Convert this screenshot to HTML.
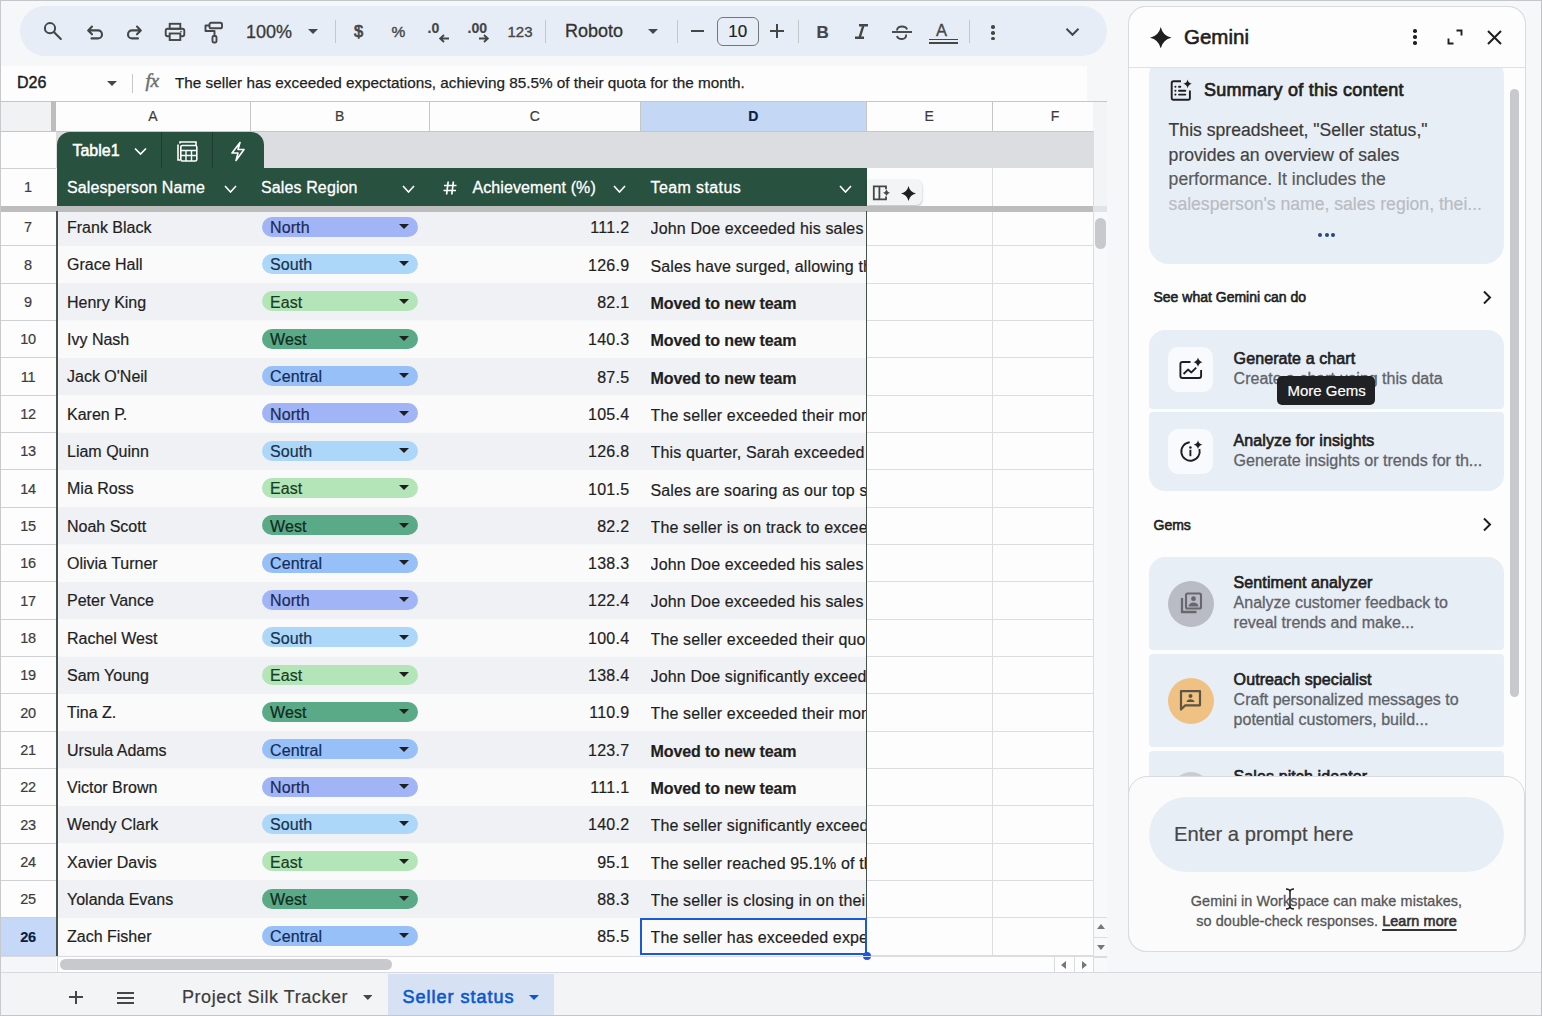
<!DOCTYPE html>
<html><head><meta charset="utf-8"><style>
html,body{margin:0;padding:0;width:1542px;height:1016px;overflow:hidden;background:#f9fbfd;}
body>div,body>svg{position:absolute;}
.t{position:absolute;white-space:nowrap;font-family:"Liberation Sans", sans-serif;-webkit-text-stroke-width:0.2px;}
</style></head><body>
<div style="left:0.00px;top:0.00px;width:1542.00px;height:1016.00px;background:#f6f7f9;"></div><div style="left:20.00px;top:6.00px;width:1087.00px;height:49.50px;background:#e7edf6;border-radius:25px;"></div><svg style="position:absolute;left:42.00px;top:20.00px;" width="22" height="22" viewBox="0 0 22 22"><circle cx="8" cy="8.2" r="5.1" fill="none" stroke="#444746" stroke-width="2"/><line x1="11.8" y1="12" x2="18.8" y2="19" stroke="#444746" stroke-width="2.1" stroke-linecap="round"/></svg><svg style="position:absolute;left:85.00px;top:21.00px;" width="20" height="20" viewBox="0 0 20 20"><path d="M7 5.5 L3.2 9.4 L7 13.3 M3.5 9.4 H13 a4 4 0 0 1 0 8 H6.5" fill="none" stroke="#444746" stroke-width="2.1" stroke-linecap="round" stroke-linejoin="round"/></svg><svg style="position:absolute;left:124.00px;top:21.00px;" width="20" height="20" viewBox="0 0 20 20"><path d="M13 5.5 L16.8 9.4 L13 13.3 M16.5 9.4 H8 a4 4 0 0 0 0 8 H14" fill="none" stroke="#444746" stroke-width="2.1" stroke-linecap="round" stroke-linejoin="round"/></svg><svg style="position:absolute;left:163.00px;top:21.00px;" width="23" height="21" viewBox="0 0 23 21"><rect x="6.7" y="2.8" width="10.6" height="5" fill="none" stroke="#444746" stroke-width="1.9"/><rect x="2.7" y="7.8" width="18.6" height="7.5" rx="2" fill="none" stroke="#444746" stroke-width="1.9"/><rect x="6.7" y="12.5" width="10.6" height="6.5" fill="#e8eef7" stroke="#444746" stroke-width="1.9"/><circle cx="18" cy="10.6" r="0.8" fill="#444746"/></svg><svg style="position:absolute;left:202.00px;top:21.00px;" width="22" height="23" viewBox="0 0 22 23"><rect x="7.5" y="1.8" width="12.5" height="5.5" rx="1.6" fill="none" stroke="#444746" stroke-width="1.9"/><path d="M7.5 4.5 H3.5 V10 H12.5 V14.5" fill="none" stroke="#444746" stroke-width="1.9" stroke-linejoin="round"/><rect x="10.5" y="15" width="4" height="6.5" rx="1.2" fill="none" stroke="#444746" stroke-width="1.9"/></svg><div class="t " style="left:246.00px;top:23.26px;font-size:18px;line-height:18px;color:#3a3a3a;font-weight:400;-webkit-text-stroke:0.3px #3a3a3a;">100%</div><svg style="position:absolute;left:308.00px;top:29.00px;" width="10" height="5" viewBox="0 0 10 5"><path d="M0 0 H10 L5.0 5 Z" fill="#444746"/></svg><div style="left:334.50px;top:19.50px;width:1.20px;height:23.50px;background:#c7c7c7;"></div><div class="t " style="left:354.00px;top:22.83px;font-size:16.5px;line-height:16.5px;color:#444746;font-weight:400;-webkit-text-stroke:0.7px #444746;">$</div><div class="t " style="left:391.50px;top:23.68px;font-size:15.5px;line-height:15.5px;color:#444746;font-weight:400;-webkit-text-stroke:0.4px #444746;">%</div><div class="t " style="left:427.50px;top:21.45px;font-size:14px;line-height:14px;color:#444746;font-weight:700;">.0</div><svg style="position:absolute;left:438.00px;top:34.00px;" width="12" height="9" viewBox="0 0 12 9"><path d="M11 4.5 H2.5 M6 1 L2.2 4.5 L6 8" fill="none" stroke="#444746" stroke-width="1.9"/></svg><div class="t " style="left:467.50px;top:21.45px;font-size:14px;line-height:14px;color:#444746;font-weight:700;">.00</div><svg style="position:absolute;left:477.50px;top:34.00px;" width="12" height="9" viewBox="0 0 12 9"><path d="M1 4.5 H9.5 M6 1 L9.8 4.5 L6 8" fill="none" stroke="#444746" stroke-width="1.9"/></svg><div class="t " style="left:507.50px;top:23.60px;font-size:15px;line-height:15px;color:#444746;font-weight:400;-webkit-text-stroke:0.35px #444746;">123</div><div style="left:545.00px;top:19.50px;width:1.20px;height:23.50px;background:#c7c7c7;"></div><div class="t " style="left:565.00px;top:21.56px;font-size:18px;line-height:18px;color:#333;font-weight:400;-webkit-text-stroke:0.3px #333;">Roboto</div><svg style="position:absolute;left:648.00px;top:29.00px;" width="10" height="5" viewBox="0 0 10 5"><path d="M0 0 H10 L5.0 5 Z" fill="#444746"/></svg><div style="left:676.50px;top:19.50px;width:1.20px;height:23.50px;background:#c7c7c7;"></div><div style="left:690.50px;top:30.20px;width:13.50px;height:1.90px;background:#444746;"></div><div style="left:716.50px;top:16.50px;width:42.00px;height:29.00px;border:1.4px solid #767676;border-radius:6px;box-sizing:border-box;"></div><div class="t " style="left:728.30px;top:22.81px;font-size:17px;line-height:17px;color:#1f1f1f;font-weight:400;">10</div><div style="left:770.40px;top:30.20px;width:13.50px;height:1.90px;background:#444746;"></div><div style="left:776.20px;top:24.20px;width:1.90px;height:13.50px;background:#444746;"></div><div style="left:797.50px;top:19.50px;width:1.20px;height:23.50px;background:#c7c7c7;"></div><div class="t " style="left:816.50px;top:24.21px;font-size:17px;line-height:17px;color:#444746;font-weight:700;">B</div><svg style="position:absolute;left:854.00px;top:24.00px;" width="15" height="15" viewBox="0 0 15 15"><path d="M5 1.2 H14 M1 13.8 H10 M9.5 1.2 L5.5 13.8" fill="none" stroke="#444746" stroke-width="2.4"/></svg><svg style="position:absolute;left:891.00px;top:22.00px;" width="22" height="20" viewBox="0 0 22 20"><path d="M6 8.5 C6 5.5 8.5 4.5 11 4.5 C13.5 4.5 15.5 5.5 16 7.5" fill="none" stroke="#444746" stroke-width="1.9"/><line x1="1" y1="10" x2="21" y2="10" stroke="#444746" stroke-width="1.9"/><path d="M15 12.5 C15.5 15.5 13.5 17 11 17 C8.5 17 6.5 16 6 14" fill="none" stroke="#444746" stroke-width="1.9"/></svg><div class="t " style="left:936.00px;top:21.63px;font-size:16.5px;line-height:16.5px;color:#444746;font-weight:400;-webkit-text-stroke:0.35px #444746;">A</div><div style="left:928.50px;top:38.70px;width:29.00px;height:1.60px;background:#444746;"></div><div style="left:928.50px;top:42.00px;width:29.00px;height:1.60px;background:#444746;"></div><div style="left:968.50px;top:19.50px;width:1.20px;height:23.50px;background:#c7c7c7;"></div><div style="left:991.30px;top:25.20px;width:3.60px;height:3.60px;background:#444746;border-radius:50%;"></div><div style="left:991.30px;top:31.00px;width:3.60px;height:3.60px;background:#444746;border-radius:50%;"></div><div style="left:991.30px;top:36.80px;width:3.60px;height:3.60px;background:#444746;border-radius:50%;"></div><svg style="position:absolute;left:1065.00px;top:27.00px;" width="15" height="10" viewBox="0 0 15 10"><path d="M1.5 1.8 L7.5 7.8 L13.5 1.8" fill="none" stroke="#444746" stroke-width="2"/></svg><div style="left:0.00px;top:65.50px;width:1087.00px;height:35.50px;background:#fdfdfd;"></div><div class="t " style="left:17.00px;top:74.96px;font-size:16px;line-height:16px;color:#1f1f1f;font-weight:400;-webkit-text-stroke:0.45px #1f1f1f;">D26</div><svg style="position:absolute;left:106.50px;top:81.00px;" width="10" height="5" viewBox="0 0 10 5"><path d="M0 0 H10 L5.0 5 Z" fill="#444746"/></svg><div style="left:131.80px;top:73.50px;width:1.20px;height:19.50px;background:#c7c7c7;"></div><div class="t " style="left:145.50px;top:71.49px;font-size:19.5px;line-height:19.5px;color:#6f6f6f;font-weight:400;font-style:italic;font-family:'Liberation Serif',serif;letter-spacing:-0.5px;-webkit-text-stroke:0.5px #6f6f6f;">fx</div><div class="t " style="left:175.00px;top:75.05px;font-size:15.3px;line-height:15.3px;color:#1f1f1f;font-weight:400;-webkit-text-stroke:0.25px #1f1f1f;">The seller has exceeded expectations, achieving 85.5% of their quota for the month.</div><div style="left:0.00px;top:101.00px;width:1093.00px;height:30.00px;background:#fdfdfd;"></div><div style="left:0.00px;top:101.00px;width:50.50px;height:30.00px;background:#f1f2f4;"></div><div style="left:640.00px;top:101.00px;width:226.50px;height:30.00px;background:#c4d7f5;"></div><div style="left:1093.00px;top:101.00px;width:14.00px;height:871.00px;background:#f8f9fa;"></div><div style="left:1093.00px;top:101.00px;width:14.00px;height:105.00px;background:#f3f4f6;"></div><div style="left:0.00px;top:131.00px;width:56.00px;height:37.00px;background:#fdfdfd;"></div><div style="left:56.00px;top:131.00px;width:1037.00px;height:37.00px;background:#dcdde0;"></div><div style="left:0.00px;top:168.00px;width:56.00px;height:38.00px;background:#fdfdfd;"></div><div style="left:866.50px;top:168.00px;width:226.50px;height:38.00px;background:#fdfdfd;"></div><div style="left:56.50px;top:168.00px;width:810.00px;height:38.00px;background:#28513f;"></div><div style="left:56.50px;top:208.50px;width:810.00px;height:37.33px;background:#f0f1f4;"></div><div style="left:0.00px;top:208.50px;width:56.00px;height:37.33px;background:#fdfdfd;"></div><div style="left:866.50px;top:208.50px;width:226.50px;height:37.33px;background:#fdfdfd;"></div><div style="left:56.50px;top:245.83px;width:810.00px;height:37.33px;background:#fafafb;"></div><div style="left:0.00px;top:245.83px;width:56.00px;height:37.33px;background:#fdfdfd;"></div><div style="left:866.50px;top:245.83px;width:226.50px;height:37.33px;background:#fdfdfd;"></div><div style="left:56.50px;top:283.17px;width:810.00px;height:37.33px;background:#f0f1f4;"></div><div style="left:0.00px;top:283.17px;width:56.00px;height:37.33px;background:#fdfdfd;"></div><div style="left:866.50px;top:283.17px;width:226.50px;height:37.33px;background:#fdfdfd;"></div><div style="left:56.50px;top:320.50px;width:810.00px;height:37.33px;background:#fafafb;"></div><div style="left:0.00px;top:320.50px;width:56.00px;height:37.33px;background:#fdfdfd;"></div><div style="left:866.50px;top:320.50px;width:226.50px;height:37.33px;background:#fdfdfd;"></div><div style="left:56.50px;top:357.83px;width:810.00px;height:37.33px;background:#f0f1f4;"></div><div style="left:0.00px;top:357.83px;width:56.00px;height:37.33px;background:#fdfdfd;"></div><div style="left:866.50px;top:357.83px;width:226.50px;height:37.33px;background:#fdfdfd;"></div><div style="left:56.50px;top:395.16px;width:810.00px;height:37.33px;background:#fafafb;"></div><div style="left:0.00px;top:395.16px;width:56.00px;height:37.33px;background:#fdfdfd;"></div><div style="left:866.50px;top:395.16px;width:226.50px;height:37.33px;background:#fdfdfd;"></div><div style="left:56.50px;top:432.50px;width:810.00px;height:37.33px;background:#f0f1f4;"></div><div style="left:0.00px;top:432.50px;width:56.00px;height:37.33px;background:#fdfdfd;"></div><div style="left:866.50px;top:432.50px;width:226.50px;height:37.33px;background:#fdfdfd;"></div><div style="left:56.50px;top:469.83px;width:810.00px;height:37.33px;background:#fafafb;"></div><div style="left:0.00px;top:469.83px;width:56.00px;height:37.33px;background:#fdfdfd;"></div><div style="left:866.50px;top:469.83px;width:226.50px;height:37.33px;background:#fdfdfd;"></div><div style="left:56.50px;top:507.16px;width:810.00px;height:37.33px;background:#f0f1f4;"></div><div style="left:0.00px;top:507.16px;width:56.00px;height:37.33px;background:#fdfdfd;"></div><div style="left:866.50px;top:507.16px;width:226.50px;height:37.33px;background:#fdfdfd;"></div><div style="left:56.50px;top:544.50px;width:810.00px;height:37.33px;background:#fafafb;"></div><div style="left:0.00px;top:544.50px;width:56.00px;height:37.33px;background:#fdfdfd;"></div><div style="left:866.50px;top:544.50px;width:226.50px;height:37.33px;background:#fdfdfd;"></div><div style="left:56.50px;top:581.83px;width:810.00px;height:37.33px;background:#f0f1f4;"></div><div style="left:0.00px;top:581.83px;width:56.00px;height:37.33px;background:#fdfdfd;"></div><div style="left:866.50px;top:581.83px;width:226.50px;height:37.33px;background:#fdfdfd;"></div><div style="left:56.50px;top:619.16px;width:810.00px;height:37.33px;background:#fafafb;"></div><div style="left:0.00px;top:619.16px;width:56.00px;height:37.33px;background:#fdfdfd;"></div><div style="left:866.50px;top:619.16px;width:226.50px;height:37.33px;background:#fdfdfd;"></div><div style="left:56.50px;top:656.50px;width:810.00px;height:37.33px;background:#f0f1f4;"></div><div style="left:0.00px;top:656.50px;width:56.00px;height:37.33px;background:#fdfdfd;"></div><div style="left:866.50px;top:656.50px;width:226.50px;height:37.33px;background:#fdfdfd;"></div><div style="left:56.50px;top:693.83px;width:810.00px;height:37.33px;background:#fafafb;"></div><div style="left:0.00px;top:693.83px;width:56.00px;height:37.33px;background:#fdfdfd;"></div><div style="left:866.50px;top:693.83px;width:226.50px;height:37.33px;background:#fdfdfd;"></div><div style="left:56.50px;top:731.16px;width:810.00px;height:37.33px;background:#f0f1f4;"></div><div style="left:0.00px;top:731.16px;width:56.00px;height:37.33px;background:#fdfdfd;"></div><div style="left:866.50px;top:731.16px;width:226.50px;height:37.33px;background:#fdfdfd;"></div><div style="left:56.50px;top:768.50px;width:810.00px;height:37.33px;background:#fafafb;"></div><div style="left:0.00px;top:768.50px;width:56.00px;height:37.33px;background:#fdfdfd;"></div><div style="left:866.50px;top:768.50px;width:226.50px;height:37.33px;background:#fdfdfd;"></div><div style="left:56.50px;top:805.83px;width:810.00px;height:37.33px;background:#f0f1f4;"></div><div style="left:0.00px;top:805.83px;width:56.00px;height:37.33px;background:#fdfdfd;"></div><div style="left:866.50px;top:805.83px;width:226.50px;height:37.33px;background:#fdfdfd;"></div><div style="left:56.50px;top:843.16px;width:810.00px;height:37.33px;background:#fafafb;"></div><div style="left:0.00px;top:843.16px;width:56.00px;height:37.33px;background:#fdfdfd;"></div><div style="left:866.50px;top:843.16px;width:226.50px;height:37.33px;background:#fdfdfd;"></div><div style="left:56.50px;top:880.49px;width:810.00px;height:37.33px;background:#f0f1f4;"></div><div style="left:0.00px;top:880.49px;width:56.00px;height:37.33px;background:#fdfdfd;"></div><div style="left:866.50px;top:880.49px;width:226.50px;height:37.33px;background:#fdfdfd;"></div><div style="left:56.50px;top:917.83px;width:810.00px;height:37.33px;background:#fafafb;"></div><div style="left:0.00px;top:917.83px;width:56.00px;height:37.33px;background:#c5d8f7;"></div><div style="left:866.50px;top:917.83px;width:226.50px;height:37.33px;background:#fdfdfd;"></div><div style="left:0.00px;top:955.50px;width:1093.00px;height:17.00px;background:#fdfdfd;"></div><div style="left:0.00px;top:955.50px;width:56.00px;height:17.00px;background:#f5f6f7;"></div><div style="left:0.00px;top:100.60px;width:1107.00px;height:1.00px;background:#c4c7c5;"></div><div style="left:0.00px;top:130.50px;width:1093.00px;height:1.00px;background:#c4c7c5;"></div><div style="left:249.50px;top:101.00px;width:1.00px;height:30.00px;background:#c4c7c5;"></div><div style="left:429.00px;top:101.00px;width:1.00px;height:30.00px;background:#c4c7c5;"></div><div style="left:639.50px;top:101.00px;width:1.00px;height:30.00px;background:#c4c7c5;"></div><div style="left:866.00px;top:101.00px;width:1.00px;height:30.00px;background:#c4c7c5;"></div><div style="left:991.50px;top:101.00px;width:1.00px;height:30.00px;background:#c4c7c5;"></div><div style="left:50.50px;top:101.00px;width:5.50px;height:30.00px;background:#bdbdbd;"></div><div style="left:0.00px;top:167.60px;width:56.00px;height:1.00px;background:#cfd0d2;"></div><div style="left:991.50px;top:168.00px;width:1.00px;height:38.00px;background:#dcdddd;"></div><div style="left:0.00px;top:245.23px;width:56.00px;height:1.10px;background:#cfd0d2;"></div><div style="left:866.50px;top:245.23px;width:226.50px;height:1.00px;background:#dcdddd;"></div><div style="left:0.00px;top:282.57px;width:56.00px;height:1.10px;background:#cfd0d2;"></div><div style="left:866.50px;top:282.57px;width:226.50px;height:1.00px;background:#dcdddd;"></div><div style="left:0.00px;top:319.90px;width:56.00px;height:1.10px;background:#cfd0d2;"></div><div style="left:866.50px;top:319.90px;width:226.50px;height:1.00px;background:#dcdddd;"></div><div style="left:0.00px;top:357.23px;width:56.00px;height:1.10px;background:#cfd0d2;"></div><div style="left:866.50px;top:357.23px;width:226.50px;height:1.00px;background:#dcdddd;"></div><div style="left:0.00px;top:394.56px;width:56.00px;height:1.10px;background:#cfd0d2;"></div><div style="left:866.50px;top:394.56px;width:226.50px;height:1.00px;background:#dcdddd;"></div><div style="left:0.00px;top:431.90px;width:56.00px;height:1.10px;background:#cfd0d2;"></div><div style="left:866.50px;top:431.90px;width:226.50px;height:1.00px;background:#dcdddd;"></div><div style="left:0.00px;top:469.23px;width:56.00px;height:1.10px;background:#cfd0d2;"></div><div style="left:866.50px;top:469.23px;width:226.50px;height:1.00px;background:#dcdddd;"></div><div style="left:0.00px;top:506.56px;width:56.00px;height:1.10px;background:#cfd0d2;"></div><div style="left:866.50px;top:506.56px;width:226.50px;height:1.00px;background:#dcdddd;"></div><div style="left:0.00px;top:543.90px;width:56.00px;height:1.10px;background:#cfd0d2;"></div><div style="left:866.50px;top:543.90px;width:226.50px;height:1.00px;background:#dcdddd;"></div><div style="left:0.00px;top:581.23px;width:56.00px;height:1.10px;background:#cfd0d2;"></div><div style="left:866.50px;top:581.23px;width:226.50px;height:1.00px;background:#dcdddd;"></div><div style="left:0.00px;top:618.56px;width:56.00px;height:1.10px;background:#cfd0d2;"></div><div style="left:866.50px;top:618.56px;width:226.50px;height:1.00px;background:#dcdddd;"></div><div style="left:0.00px;top:655.90px;width:56.00px;height:1.10px;background:#cfd0d2;"></div><div style="left:866.50px;top:655.90px;width:226.50px;height:1.00px;background:#dcdddd;"></div><div style="left:0.00px;top:693.23px;width:56.00px;height:1.10px;background:#cfd0d2;"></div><div style="left:866.50px;top:693.23px;width:226.50px;height:1.00px;background:#dcdddd;"></div><div style="left:0.00px;top:730.56px;width:56.00px;height:1.10px;background:#cfd0d2;"></div><div style="left:866.50px;top:730.56px;width:226.50px;height:1.00px;background:#dcdddd;"></div><div style="left:0.00px;top:767.89px;width:56.00px;height:1.10px;background:#cfd0d2;"></div><div style="left:866.50px;top:767.89px;width:226.50px;height:1.00px;background:#dcdddd;"></div><div style="left:0.00px;top:805.23px;width:56.00px;height:1.10px;background:#cfd0d2;"></div><div style="left:866.50px;top:805.23px;width:226.50px;height:1.00px;background:#dcdddd;"></div><div style="left:0.00px;top:842.56px;width:56.00px;height:1.10px;background:#cfd0d2;"></div><div style="left:866.50px;top:842.56px;width:226.50px;height:1.00px;background:#dcdddd;"></div><div style="left:0.00px;top:879.89px;width:56.00px;height:1.10px;background:#cfd0d2;"></div><div style="left:866.50px;top:879.89px;width:226.50px;height:1.00px;background:#dcdddd;"></div><div style="left:0.00px;top:917.23px;width:56.00px;height:1.10px;background:#cfd0d2;"></div><div style="left:866.50px;top:917.23px;width:226.50px;height:1.00px;background:#dcdddd;"></div><div style="left:0.00px;top:954.56px;width:56.00px;height:1.10px;background:#cfd0d2;"></div><div style="left:866.50px;top:954.56px;width:226.50px;height:1.00px;background:#dcdddd;"></div><div style="left:991.50px;top:211.00px;width:1.00px;height:744.50px;background:#dcdddd;"></div><div style="left:1092.50px;top:131.00px;width:1.00px;height:841.00px;background:#dcdddd;"></div><div class="t" style="left:56.00px;top:108.96px;width:194.00px;text-align:center;font-size:14px;line-height:14px;color:#3c3c3c;-webkit-text-stroke:0.2px #3c3c3c">A</div><div class="t" style="left:250.00px;top:108.96px;width:179.50px;text-align:center;font-size:14px;line-height:14px;color:#3c3c3c;-webkit-text-stroke:0.2px #3c3c3c">B</div><div class="t" style="left:429.50px;top:108.96px;width:210.50px;text-align:center;font-size:14px;line-height:14px;color:#3c3c3c;-webkit-text-stroke:0.2px #3c3c3c">C</div><div class="t" style="left:640.00px;top:108.96px;width:226.50px;text-align:center;font-size:14px;line-height:14px;font-weight:700;color:#0a1f44">D</div><div class="t" style="left:866.50px;top:108.96px;width:125.50px;text-align:center;font-size:14px;line-height:14px;color:#3c3c3c;-webkit-text-stroke:0.2px #3c3c3c">E</div><div class="t" style="left:992.00px;top:108.96px;width:126.00px;text-align:center;font-size:14px;line-height:14px;color:#3c3c3c;-webkit-text-stroke:0.2px #3c3c3c">F</div><div style="left:56.50px;top:131.80px;width:207.50px;height:40.00px;background:#28513f;border-radius:13px 13px 0 0;"></div><div class="t " style="left:72.40px;top:142.56px;font-size:16px;line-height:16px;color:#ffffff;font-weight:400;-webkit-text-stroke:0.5px #fff;">Table1</div><svg style="position:absolute;left:134.00px;top:147.00px;" width="13" height="9" viewBox="0 0 13 9"><path d="M1 1.5 L6.5 7 L12 1.5" fill="none" stroke="#fff" stroke-width="1.7"/></svg><div style="left:160.80px;top:132.00px;width:1.00px;height:36.00px;background:#1d3b2e;"></div><div style="left:212.00px;top:132.00px;width:1.00px;height:36.00px;background:#1d3b2e;"></div><svg style="position:absolute;left:175.50px;top:140.00px;" width="23" height="22" viewBox="0 0 23 22"><path d="M4 3.5 V2 H20 V6" fill="none" stroke="#fff" stroke-width="1.6"/><path d="M2 4.5 V20 H4" fill="none" stroke="#fff" stroke-width="1.6"/><rect x="4.8" y="5.5" width="16" height="15.5" rx="1.5" fill="none" stroke="#fff" stroke-width="1.6"/><path d="M4.8 10.5 H20.8 M4.8 15.5 H20.8 M10 10.5 V21 M15.5 10.5 V21" stroke="#fff" stroke-width="1.4"/></svg><svg style="position:absolute;left:228.50px;top:140.50px;" width="18" height="21" viewBox="0 0 18 21"><path d="M11 1.5 L3 12 H9 L7 19.5 L15 8.5 H9 Z" fill="none" stroke="#fff" stroke-width="1.6" stroke-linejoin="round"/></svg><div style="left:56.50px;top:168.00px;width:810.00px;height:38.00px;background:#28513f;"></div><div class="t" style="left:0;top:180.23px;width:56px;text-align:center;font-size:14.5px;line-height:14.5px;color:#3c3c3c;letter-spacing:-0.3px">1</div><div class="t " style="left:67.00px;top:179.56px;font-size:16px;line-height:16px;color:#ffffff;font-weight:400;letter-spacing:0.12px;-webkit-text-stroke:0.3px #fff;">Salesperson Name</div><svg style="position:absolute;left:223.50px;top:185.00px;" width="13" height="8" viewBox="0 0 13 8"><path d="M1 1 L6.5 7 L12 1" fill="none" stroke="#fff" stroke-width="1.6"/></svg><div class="t " style="left:261.00px;top:179.56px;font-size:16px;line-height:16px;color:#ffffff;font-weight:400;letter-spacing:0.12px;-webkit-text-stroke:0.3px #fff;">Sales Region</div><svg style="position:absolute;left:401.50px;top:185.00px;" width="13" height="8" viewBox="0 0 13 8"><path d="M1 1 L6.5 7 L12 1" fill="none" stroke="#fff" stroke-width="1.6"/></svg><svg style="position:absolute;left:442.00px;top:180.00px;" width="16" height="16" viewBox="0 0 16 16"><path d="M6.2 1.5 L4.6 14.5 M11.4 1.5 L9.8 14.5 M2 5.5 H14.5 M1.5 10.5 H14" stroke="#fff" stroke-width="1.7" fill="none"/></svg><div class="t " style="left:472.50px;top:179.56px;font-size:16px;line-height:16px;color:#ffffff;font-weight:400;letter-spacing:0.1px;-webkit-text-stroke:0.3px #fff;">Achievement (%)</div><svg style="position:absolute;left:612.50px;top:185.00px;" width="13" height="8" viewBox="0 0 13 8"><path d="M1 1 L6.5 7 L12 1" fill="none" stroke="#fff" stroke-width="1.6"/></svg><div class="t " style="left:650.50px;top:179.56px;font-size:16px;line-height:16px;color:#ffffff;font-weight:400;letter-spacing:0.4px;-webkit-text-stroke:0.3px #fff;">Team status</div><svg style="position:absolute;left:839.00px;top:185.00px;" width="13" height="8" viewBox="0 0 13 8"><path d="M1 1 L6.5 7 L12 1" fill="none" stroke="#fff" stroke-width="1.6"/></svg><div style="left:866.50px;top:180.30px;width:55.20px;height:24.60px;background:#f3f4f5;border-radius:0 6px 6px 0;box-shadow:0 1px 2.5px rgba(0,0,0,0.28);"></div><svg style="position:absolute;left:872.00px;top:185.00px;" width="19" height="16" viewBox="0 0 19 16"><path d="M14 4.2 V1.3 H1.8 V14.3 H14 V11.4" fill="none" stroke="#444746" stroke-width="1.8"/><line x1="7.4" y1="1.3" x2="7.4" y2="14.3" stroke="#444746" stroke-width="1.8"/><path d="M14.5 4.6 Q15.2 7.1 18 7.8 Q15.2 8.5 14.5 11 Q13.8 8.5 11 7.8 Q13.8 7.1 14.5 4.6 Z" fill="#444746"/></svg><svg style="position:absolute;left:900.50px;top:185.50px;" width="15" height="15" viewBox="0 0 15 15"><path d="M7.5 0 Q8.9 6.1 15 7.5 Q8.9 8.9 7.5 15 Q6.1 8.9 0 7.5 Q6.1 6.1 7.5 0 Z" fill="#1f1f1f"/></svg><div class="t" style="left:0;top:220.33px;width:56px;text-align:center;font-size:14.5px;line-height:14.5px;color:#3c3c3c;letter-spacing:-0.3px">7</div><div class="t " style="left:67.00px;top:220.16px;font-size:16px;line-height:16px;color:#1f1f1f;font-weight:400;-webkit-text-stroke:0.2px #1f1f1f;">Frank Black</div><div style="left:262.00px;top:216.60px;width:155.50px;height:20.00px;background:#a1b5f6;border-radius:10px;"></div><div class="t " style="left:270.00px;top:220.16px;font-size:16px;line-height:16px;color:#1b2b55;font-weight:400;letter-spacing:0.1px;">North</div><svg style="position:absolute;left:399.00px;top:224.00px;" width="10" height="5" viewBox="0 0 10 5"><path d="M0 0 H10 L5.0 5 Z" fill="#1f1f1f"/></svg><div class="t" style="left:440px;top:220.16px;width:189.5px;text-align:right;font-size:16px;line-height:16px;color:#1f1f1f;-webkit-text-stroke:0.2px #1f1f1f;letter-spacing:0.3px">111.2</div><div class="t" style="left:650.5px;top:220.16px;width:215.5px;overflow:hidden;font-size:16px;line-height:17px;color:#1f1f1f;-webkit-text-stroke:0.2px #1f1f1f;letter-spacing:0.15px;font-weight:400">John Doe exceeded his sales</div><div class="t" style="left:0;top:257.67px;width:56px;text-align:center;font-size:14.5px;line-height:14.5px;color:#3c3c3c;letter-spacing:-0.3px">8</div><div class="t " style="left:67.00px;top:257.49px;font-size:16px;line-height:16px;color:#1f1f1f;font-weight:400;-webkit-text-stroke:0.2px #1f1f1f;">Grace Hall</div><div style="left:262.00px;top:253.93px;width:155.50px;height:20.00px;background:#acd7f9;border-radius:10px;"></div><div class="t " style="left:270.00px;top:257.49px;font-size:16px;line-height:16px;color:#17324f;font-weight:400;letter-spacing:0.1px;">South</div><svg style="position:absolute;left:399.00px;top:261.33px;" width="10" height="5" viewBox="0 0 10 5"><path d="M0 0 H10 L5.0 5 Z" fill="#1f1f1f"/></svg><div class="t" style="left:440px;top:257.50px;width:189.5px;text-align:right;font-size:16px;line-height:16px;color:#1f1f1f;-webkit-text-stroke:0.2px #1f1f1f;letter-spacing:0.3px">126.9</div><div class="t" style="left:650.5px;top:257.50px;width:215.5px;overflow:hidden;font-size:16px;line-height:17px;color:#1f1f1f;-webkit-text-stroke:0.2px #1f1f1f;letter-spacing:0.15px;font-weight:400">Sales have surged, allowing th</div><div class="t" style="left:0;top:295.00px;width:56px;text-align:center;font-size:14.5px;line-height:14.5px;color:#3c3c3c;letter-spacing:-0.3px">9</div><div class="t " style="left:67.00px;top:294.82px;font-size:16px;line-height:16px;color:#1f1f1f;font-weight:400;-webkit-text-stroke:0.2px #1f1f1f;">Henry King</div><div style="left:262.00px;top:291.27px;width:155.50px;height:20.00px;background:#b4e5b9;border-radius:10px;"></div><div class="t " style="left:270.00px;top:294.82px;font-size:16px;line-height:16px;color:#173d22;font-weight:400;letter-spacing:0.1px;">East</div><svg style="position:absolute;left:399.00px;top:298.67px;" width="10" height="5" viewBox="0 0 10 5"><path d="M0 0 H10 L5.0 5 Z" fill="#1f1f1f"/></svg><div class="t" style="left:440px;top:294.83px;width:189.5px;text-align:right;font-size:16px;line-height:16px;color:#1f1f1f;-webkit-text-stroke:0.2px #1f1f1f;letter-spacing:0.3px">82.1</div><div class="t" style="left:650.5px;top:294.83px;width:215.5px;overflow:hidden;font-size:16px;line-height:17px;color:#1f1f1f;-webkit-text-stroke:0.2px #1f1f1f;letter-spacing:-0.1px;font-weight:700">Moved to new team</div><div class="t" style="left:0;top:332.33px;width:56px;text-align:center;font-size:14.5px;line-height:14.5px;color:#3c3c3c;letter-spacing:-0.3px">10</div><div class="t " style="left:67.00px;top:332.16px;font-size:16px;line-height:16px;color:#1f1f1f;font-weight:400;-webkit-text-stroke:0.2px #1f1f1f;">Ivy Nash</div><div style="left:262.00px;top:328.60px;width:155.50px;height:20.00px;background:#5aaa88;border-radius:10px;"></div><div class="t " style="left:270.00px;top:332.16px;font-size:16px;line-height:16px;color:#10291d;font-weight:400;letter-spacing:0.1px;">West</div><svg style="position:absolute;left:399.00px;top:336.00px;" width="10" height="5" viewBox="0 0 10 5"><path d="M0 0 H10 L5.0 5 Z" fill="#1f1f1f"/></svg><div class="t" style="left:440px;top:332.16px;width:189.5px;text-align:right;font-size:16px;line-height:16px;color:#1f1f1f;-webkit-text-stroke:0.2px #1f1f1f;letter-spacing:0.3px">140.3</div><div class="t" style="left:650.5px;top:332.16px;width:215.5px;overflow:hidden;font-size:16px;line-height:17px;color:#1f1f1f;-webkit-text-stroke:0.2px #1f1f1f;letter-spacing:-0.1px;font-weight:700">Moved to new team</div><div class="t" style="left:0;top:369.66px;width:56px;text-align:center;font-size:14.5px;line-height:14.5px;color:#3c3c3c;letter-spacing:-0.3px">11</div><div class="t " style="left:67.00px;top:369.49px;font-size:16px;line-height:16px;color:#1f1f1f;font-weight:400;-webkit-text-stroke:0.2px #1f1f1f;">Jack O'Neil</div><div style="left:262.00px;top:365.93px;width:155.50px;height:20.00px;background:#97bff8;border-radius:10px;"></div><div class="t " style="left:270.00px;top:369.49px;font-size:16px;line-height:16px;color:#152c55;font-weight:400;letter-spacing:0.1px;">Central</div><svg style="position:absolute;left:399.00px;top:373.33px;" width="10" height="5" viewBox="0 0 10 5"><path d="M0 0 H10 L5.0 5 Z" fill="#1f1f1f"/></svg><div class="t" style="left:440px;top:369.50px;width:189.5px;text-align:right;font-size:16px;line-height:16px;color:#1f1f1f;-webkit-text-stroke:0.2px #1f1f1f;letter-spacing:0.3px">87.5</div><div class="t" style="left:650.5px;top:369.50px;width:215.5px;overflow:hidden;font-size:16px;line-height:17px;color:#1f1f1f;-webkit-text-stroke:0.2px #1f1f1f;letter-spacing:-0.1px;font-weight:700">Moved to new team</div><div class="t" style="left:0;top:407.00px;width:56px;text-align:center;font-size:14.5px;line-height:14.5px;color:#3c3c3c;letter-spacing:-0.3px">12</div><div class="t " style="left:67.00px;top:406.82px;font-size:16px;line-height:16px;color:#1f1f1f;font-weight:400;-webkit-text-stroke:0.2px #1f1f1f;">Karen P.</div><div style="left:262.00px;top:403.26px;width:155.50px;height:20.00px;background:#a1b5f6;border-radius:10px;"></div><div class="t " style="left:270.00px;top:406.82px;font-size:16px;line-height:16px;color:#1b2b55;font-weight:400;letter-spacing:0.1px;">North</div><svg style="position:absolute;left:399.00px;top:410.66px;" width="10" height="5" viewBox="0 0 10 5"><path d="M0 0 H10 L5.0 5 Z" fill="#1f1f1f"/></svg><div class="t" style="left:440px;top:406.83px;width:189.5px;text-align:right;font-size:16px;line-height:16px;color:#1f1f1f;-webkit-text-stroke:0.2px #1f1f1f;letter-spacing:0.3px">105.4</div><div class="t" style="left:650.5px;top:406.83px;width:215.5px;overflow:hidden;font-size:16px;line-height:17px;color:#1f1f1f;-webkit-text-stroke:0.2px #1f1f1f;letter-spacing:0.15px;font-weight:400">The seller exceeded their mon</div><div class="t" style="left:0;top:444.33px;width:56px;text-align:center;font-size:14.5px;line-height:14.5px;color:#3c3c3c;letter-spacing:-0.3px">13</div><div class="t " style="left:67.00px;top:444.15px;font-size:16px;line-height:16px;color:#1f1f1f;font-weight:400;-webkit-text-stroke:0.2px #1f1f1f;">Liam Quinn</div><div style="left:262.00px;top:440.60px;width:155.50px;height:20.00px;background:#acd7f9;border-radius:10px;"></div><div class="t " style="left:270.00px;top:444.15px;font-size:16px;line-height:16px;color:#17324f;font-weight:400;letter-spacing:0.1px;">South</div><svg style="position:absolute;left:399.00px;top:448.00px;" width="10" height="5" viewBox="0 0 10 5"><path d="M0 0 H10 L5.0 5 Z" fill="#1f1f1f"/></svg><div class="t" style="left:440px;top:444.16px;width:189.5px;text-align:right;font-size:16px;line-height:16px;color:#1f1f1f;-webkit-text-stroke:0.2px #1f1f1f;letter-spacing:0.3px">126.8</div><div class="t" style="left:650.5px;top:444.16px;width:215.5px;overflow:hidden;font-size:16px;line-height:17px;color:#1f1f1f;-webkit-text-stroke:0.2px #1f1f1f;letter-spacing:0.15px;font-weight:400">This quarter, Sarah exceeded</div><div class="t" style="left:0;top:481.66px;width:56px;text-align:center;font-size:14.5px;line-height:14.5px;color:#3c3c3c;letter-spacing:-0.3px">14</div><div class="t " style="left:67.00px;top:481.49px;font-size:16px;line-height:16px;color:#1f1f1f;font-weight:400;-webkit-text-stroke:0.2px #1f1f1f;">Mia Ross</div><div style="left:262.00px;top:477.93px;width:155.50px;height:20.00px;background:#b4e5b9;border-radius:10px;"></div><div class="t " style="left:270.00px;top:481.49px;font-size:16px;line-height:16px;color:#173d22;font-weight:400;letter-spacing:0.1px;">East</div><svg style="position:absolute;left:399.00px;top:485.33px;" width="10" height="5" viewBox="0 0 10 5"><path d="M0 0 H10 L5.0 5 Z" fill="#1f1f1f"/></svg><div class="t" style="left:440px;top:481.50px;width:189.5px;text-align:right;font-size:16px;line-height:16px;color:#1f1f1f;-webkit-text-stroke:0.2px #1f1f1f;letter-spacing:0.3px">101.5</div><div class="t" style="left:650.5px;top:481.50px;width:215.5px;overflow:hidden;font-size:16px;line-height:17px;color:#1f1f1f;-webkit-text-stroke:0.2px #1f1f1f;letter-spacing:0.15px;font-weight:400">Sales are soaring as our top sel</div><div class="t" style="left:0;top:519.00px;width:56px;text-align:center;font-size:14.5px;line-height:14.5px;color:#3c3c3c;letter-spacing:-0.3px">15</div><div class="t " style="left:67.00px;top:518.82px;font-size:16px;line-height:16px;color:#1f1f1f;font-weight:400;-webkit-text-stroke:0.2px #1f1f1f;">Noah Scott</div><div style="left:262.00px;top:515.26px;width:155.50px;height:20.00px;background:#5aaa88;border-radius:10px;"></div><div class="t " style="left:270.00px;top:518.82px;font-size:16px;line-height:16px;color:#10291d;font-weight:400;letter-spacing:0.1px;">West</div><svg style="position:absolute;left:399.00px;top:522.66px;" width="10" height="5" viewBox="0 0 10 5"><path d="M0 0 H10 L5.0 5 Z" fill="#1f1f1f"/></svg><div class="t" style="left:440px;top:518.83px;width:189.5px;text-align:right;font-size:16px;line-height:16px;color:#1f1f1f;-webkit-text-stroke:0.2px #1f1f1f;letter-spacing:0.3px">82.2</div><div class="t" style="left:650.5px;top:518.83px;width:215.5px;overflow:hidden;font-size:16px;line-height:17px;color:#1f1f1f;-webkit-text-stroke:0.2px #1f1f1f;letter-spacing:0.15px;font-weight:400">The seller is on track to exceed</div><div class="t" style="left:0;top:556.33px;width:56px;text-align:center;font-size:14.5px;line-height:14.5px;color:#3c3c3c;letter-spacing:-0.3px">16</div><div class="t " style="left:67.00px;top:556.15px;font-size:16px;line-height:16px;color:#1f1f1f;font-weight:400;-webkit-text-stroke:0.2px #1f1f1f;">Olivia Turner</div><div style="left:262.00px;top:552.60px;width:155.50px;height:20.00px;background:#97bff8;border-radius:10px;"></div><div class="t " style="left:270.00px;top:556.15px;font-size:16px;line-height:16px;color:#152c55;font-weight:400;letter-spacing:0.1px;">Central</div><svg style="position:absolute;left:399.00px;top:560.00px;" width="10" height="5" viewBox="0 0 10 5"><path d="M0 0 H10 L5.0 5 Z" fill="#1f1f1f"/></svg><div class="t" style="left:440px;top:556.16px;width:189.5px;text-align:right;font-size:16px;line-height:16px;color:#1f1f1f;-webkit-text-stroke:0.2px #1f1f1f;letter-spacing:0.3px">138.3</div><div class="t" style="left:650.5px;top:556.16px;width:215.5px;overflow:hidden;font-size:16px;line-height:17px;color:#1f1f1f;-webkit-text-stroke:0.2px #1f1f1f;letter-spacing:0.15px;font-weight:400">John Doe exceeded his sales</div><div class="t" style="left:0;top:593.66px;width:56px;text-align:center;font-size:14.5px;line-height:14.5px;color:#3c3c3c;letter-spacing:-0.3px">17</div><div class="t " style="left:67.00px;top:593.49px;font-size:16px;line-height:16px;color:#1f1f1f;font-weight:400;-webkit-text-stroke:0.2px #1f1f1f;">Peter Vance</div><div style="left:262.00px;top:589.93px;width:155.50px;height:20.00px;background:#a1b5f6;border-radius:10px;"></div><div class="t " style="left:270.00px;top:593.49px;font-size:16px;line-height:16px;color:#1b2b55;font-weight:400;letter-spacing:0.1px;">North</div><svg style="position:absolute;left:399.00px;top:597.33px;" width="10" height="5" viewBox="0 0 10 5"><path d="M0 0 H10 L5.0 5 Z" fill="#1f1f1f"/></svg><div class="t" style="left:440px;top:593.49px;width:189.5px;text-align:right;font-size:16px;line-height:16px;color:#1f1f1f;-webkit-text-stroke:0.2px #1f1f1f;letter-spacing:0.3px">122.4</div><div class="t" style="left:650.5px;top:593.49px;width:215.5px;overflow:hidden;font-size:16px;line-height:17px;color:#1f1f1f;-webkit-text-stroke:0.2px #1f1f1f;letter-spacing:0.15px;font-weight:400">John Doe exceeded his sales</div><div class="t" style="left:0;top:631.00px;width:56px;text-align:center;font-size:14.5px;line-height:14.5px;color:#3c3c3c;letter-spacing:-0.3px">18</div><div class="t " style="left:67.00px;top:630.82px;font-size:16px;line-height:16px;color:#1f1f1f;font-weight:400;-webkit-text-stroke:0.2px #1f1f1f;">Rachel West</div><div style="left:262.00px;top:627.26px;width:155.50px;height:20.00px;background:#acd7f9;border-radius:10px;"></div><div class="t " style="left:270.00px;top:630.82px;font-size:16px;line-height:16px;color:#17324f;font-weight:400;letter-spacing:0.1px;">South</div><svg style="position:absolute;left:399.00px;top:634.66px;" width="10" height="5" viewBox="0 0 10 5"><path d="M0 0 H10 L5.0 5 Z" fill="#1f1f1f"/></svg><div class="t" style="left:440px;top:630.83px;width:189.5px;text-align:right;font-size:16px;line-height:16px;color:#1f1f1f;-webkit-text-stroke:0.2px #1f1f1f;letter-spacing:0.3px">100.4</div><div class="t" style="left:650.5px;top:630.83px;width:215.5px;overflow:hidden;font-size:16px;line-height:17px;color:#1f1f1f;-webkit-text-stroke:0.2px #1f1f1f;letter-spacing:0.15px;font-weight:400">The seller exceeded their quota</div><div class="t" style="left:0;top:668.33px;width:56px;text-align:center;font-size:14.5px;line-height:14.5px;color:#3c3c3c;letter-spacing:-0.3px">19</div><div class="t " style="left:67.00px;top:668.15px;font-size:16px;line-height:16px;color:#1f1f1f;font-weight:400;-webkit-text-stroke:0.2px #1f1f1f;">Sam Young</div><div style="left:262.00px;top:664.60px;width:155.50px;height:20.00px;background:#b4e5b9;border-radius:10px;"></div><div class="t " style="left:270.00px;top:668.15px;font-size:16px;line-height:16px;color:#173d22;font-weight:400;letter-spacing:0.1px;">East</div><svg style="position:absolute;left:399.00px;top:672.00px;" width="10" height="5" viewBox="0 0 10 5"><path d="M0 0 H10 L5.0 5 Z" fill="#1f1f1f"/></svg><div class="t" style="left:440px;top:668.16px;width:189.5px;text-align:right;font-size:16px;line-height:16px;color:#1f1f1f;-webkit-text-stroke:0.2px #1f1f1f;letter-spacing:0.3px">138.4</div><div class="t" style="left:650.5px;top:668.16px;width:215.5px;overflow:hidden;font-size:16px;line-height:17px;color:#1f1f1f;-webkit-text-stroke:0.2px #1f1f1f;letter-spacing:0.15px;font-weight:400">John Doe significantly exceeded</div><div class="t" style="left:0;top:705.66px;width:56px;text-align:center;font-size:14.5px;line-height:14.5px;color:#3c3c3c;letter-spacing:-0.3px">20</div><div class="t " style="left:67.00px;top:705.49px;font-size:16px;line-height:16px;color:#1f1f1f;font-weight:400;-webkit-text-stroke:0.2px #1f1f1f;">Tina Z.</div><div style="left:262.00px;top:701.93px;width:155.50px;height:20.00px;background:#5aaa88;border-radius:10px;"></div><div class="t " style="left:270.00px;top:705.49px;font-size:16px;line-height:16px;color:#10291d;font-weight:400;letter-spacing:0.1px;">West</div><svg style="position:absolute;left:399.00px;top:709.33px;" width="10" height="5" viewBox="0 0 10 5"><path d="M0 0 H10 L5.0 5 Z" fill="#1f1f1f"/></svg><div class="t" style="left:440px;top:705.49px;width:189.5px;text-align:right;font-size:16px;line-height:16px;color:#1f1f1f;-webkit-text-stroke:0.2px #1f1f1f;letter-spacing:0.3px">110.9</div><div class="t" style="left:650.5px;top:705.49px;width:215.5px;overflow:hidden;font-size:16px;line-height:17px;color:#1f1f1f;-webkit-text-stroke:0.2px #1f1f1f;letter-spacing:0.15px;font-weight:400">The seller exceeded their mon</div><div class="t" style="left:0;top:743.00px;width:56px;text-align:center;font-size:14.5px;line-height:14.5px;color:#3c3c3c;letter-spacing:-0.3px">21</div><div class="t " style="left:67.00px;top:742.82px;font-size:16px;line-height:16px;color:#1f1f1f;font-weight:400;-webkit-text-stroke:0.2px #1f1f1f;">Ursula Adams</div><div style="left:262.00px;top:739.26px;width:155.50px;height:20.00px;background:#97bff8;border-radius:10px;"></div><div class="t " style="left:270.00px;top:742.82px;font-size:16px;line-height:16px;color:#152c55;font-weight:400;letter-spacing:0.1px;">Central</div><svg style="position:absolute;left:399.00px;top:746.66px;" width="10" height="5" viewBox="0 0 10 5"><path d="M0 0 H10 L5.0 5 Z" fill="#1f1f1f"/></svg><div class="t" style="left:440px;top:742.83px;width:189.5px;text-align:right;font-size:16px;line-height:16px;color:#1f1f1f;-webkit-text-stroke:0.2px #1f1f1f;letter-spacing:0.3px">123.7</div><div class="t" style="left:650.5px;top:742.83px;width:215.5px;overflow:hidden;font-size:16px;line-height:17px;color:#1f1f1f;-webkit-text-stroke:0.2px #1f1f1f;letter-spacing:-0.1px;font-weight:700">Moved to new team</div><div class="t" style="left:0;top:780.33px;width:56px;text-align:center;font-size:14.5px;line-height:14.5px;color:#3c3c3c;letter-spacing:-0.3px">22</div><div class="t " style="left:67.00px;top:780.15px;font-size:16px;line-height:16px;color:#1f1f1f;font-weight:400;-webkit-text-stroke:0.2px #1f1f1f;">Victor Brown</div><div style="left:262.00px;top:776.60px;width:155.50px;height:20.00px;background:#a1b5f6;border-radius:10px;"></div><div class="t " style="left:270.00px;top:780.15px;font-size:16px;line-height:16px;color:#1b2b55;font-weight:400;letter-spacing:0.1px;">North</div><svg style="position:absolute;left:399.00px;top:784.00px;" width="10" height="5" viewBox="0 0 10 5"><path d="M0 0 H10 L5.0 5 Z" fill="#1f1f1f"/></svg><div class="t" style="left:440px;top:780.16px;width:189.5px;text-align:right;font-size:16px;line-height:16px;color:#1f1f1f;-webkit-text-stroke:0.2px #1f1f1f;letter-spacing:0.3px">111.1</div><div class="t" style="left:650.5px;top:780.16px;width:215.5px;overflow:hidden;font-size:16px;line-height:17px;color:#1f1f1f;-webkit-text-stroke:0.2px #1f1f1f;letter-spacing:-0.1px;font-weight:700">Moved to new team</div><div class="t" style="left:0;top:817.66px;width:56px;text-align:center;font-size:14.5px;line-height:14.5px;color:#3c3c3c;letter-spacing:-0.3px">23</div><div class="t " style="left:67.00px;top:817.48px;font-size:16px;line-height:16px;color:#1f1f1f;font-weight:400;-webkit-text-stroke:0.2px #1f1f1f;">Wendy Clark</div><div style="left:262.00px;top:813.93px;width:155.50px;height:20.00px;background:#acd7f9;border-radius:10px;"></div><div class="t " style="left:270.00px;top:817.48px;font-size:16px;line-height:16px;color:#17324f;font-weight:400;letter-spacing:0.1px;">South</div><svg style="position:absolute;left:399.00px;top:821.33px;" width="10" height="5" viewBox="0 0 10 5"><path d="M0 0 H10 L5.0 5 Z" fill="#1f1f1f"/></svg><div class="t" style="left:440px;top:817.49px;width:189.5px;text-align:right;font-size:16px;line-height:16px;color:#1f1f1f;-webkit-text-stroke:0.2px #1f1f1f;letter-spacing:0.3px">140.2</div><div class="t" style="left:650.5px;top:817.49px;width:215.5px;overflow:hidden;font-size:16px;line-height:17px;color:#1f1f1f;-webkit-text-stroke:0.2px #1f1f1f;letter-spacing:0.15px;font-weight:400">The seller significantly exceeded</div><div class="t" style="left:0;top:854.99px;width:56px;text-align:center;font-size:14.5px;line-height:14.5px;color:#3c3c3c;letter-spacing:-0.3px">24</div><div class="t " style="left:67.00px;top:854.82px;font-size:16px;line-height:16px;color:#1f1f1f;font-weight:400;-webkit-text-stroke:0.2px #1f1f1f;">Xavier Davis</div><div style="left:262.00px;top:851.26px;width:155.50px;height:20.00px;background:#b4e5b9;border-radius:10px;"></div><div class="t " style="left:270.00px;top:854.82px;font-size:16px;line-height:16px;color:#173d22;font-weight:400;letter-spacing:0.1px;">East</div><svg style="position:absolute;left:399.00px;top:858.66px;" width="10" height="5" viewBox="0 0 10 5"><path d="M0 0 H10 L5.0 5 Z" fill="#1f1f1f"/></svg><div class="t" style="left:440px;top:854.83px;width:189.5px;text-align:right;font-size:16px;line-height:16px;color:#1f1f1f;-webkit-text-stroke:0.2px #1f1f1f;letter-spacing:0.3px">95.1</div><div class="t" style="left:650.5px;top:854.83px;width:215.5px;overflow:hidden;font-size:16px;line-height:17px;color:#1f1f1f;-webkit-text-stroke:0.2px #1f1f1f;letter-spacing:0.15px;font-weight:400">The seller reached 95.1% of th</div><div class="t" style="left:0;top:892.33px;width:56px;text-align:center;font-size:14.5px;line-height:14.5px;color:#3c3c3c;letter-spacing:-0.3px">25</div><div class="t " style="left:67.00px;top:892.15px;font-size:16px;line-height:16px;color:#1f1f1f;font-weight:400;-webkit-text-stroke:0.2px #1f1f1f;">Yolanda Evans</div><div style="left:262.00px;top:888.59px;width:155.50px;height:20.00px;background:#5aaa88;border-radius:10px;"></div><div class="t " style="left:270.00px;top:892.15px;font-size:16px;line-height:16px;color:#10291d;font-weight:400;letter-spacing:0.1px;">West</div><svg style="position:absolute;left:399.00px;top:895.99px;" width="10" height="5" viewBox="0 0 10 5"><path d="M0 0 H10 L5.0 5 Z" fill="#1f1f1f"/></svg><div class="t" style="left:440px;top:892.16px;width:189.5px;text-align:right;font-size:16px;line-height:16px;color:#1f1f1f;-webkit-text-stroke:0.2px #1f1f1f;letter-spacing:0.3px">88.3</div><div class="t" style="left:650.5px;top:892.16px;width:215.5px;overflow:hidden;font-size:16px;line-height:17px;color:#1f1f1f;-webkit-text-stroke:0.2px #1f1f1f;letter-spacing:0.15px;font-weight:400">The seller is closing in on their</div><div class="t" style="left:0;top:929.66px;width:56px;text-align:center;font-size:14.5px;line-height:14.5px;font-weight:700;color:#0a1f44;letter-spacing:-0.3px">26</div><div class="t " style="left:67.00px;top:929.48px;font-size:16px;line-height:16px;color:#1f1f1f;font-weight:400;-webkit-text-stroke:0.2px #1f1f1f;">Zach Fisher</div><div style="left:262.00px;top:925.93px;width:155.50px;height:20.00px;background:#97bff8;border-radius:10px;"></div><div class="t " style="left:270.00px;top:929.48px;font-size:16px;line-height:16px;color:#152c55;font-weight:400;letter-spacing:0.1px;">Central</div><svg style="position:absolute;left:399.00px;top:933.33px;" width="10" height="5" viewBox="0 0 10 5"><path d="M0 0 H10 L5.0 5 Z" fill="#1f1f1f"/></svg><div class="t" style="left:440px;top:929.49px;width:189.5px;text-align:right;font-size:16px;line-height:16px;color:#1f1f1f;-webkit-text-stroke:0.2px #1f1f1f;letter-spacing:0.3px">85.5</div><div class="t" style="left:650.5px;top:929.49px;width:215.5px;overflow:hidden;font-size:16px;line-height:17px;color:#1f1f1f;-webkit-text-stroke:0.2px #1f1f1f;letter-spacing:0.15px;font-weight:400">The seller has exceeded expe</div><div style="left:0.00px;top:206.00px;width:1093.00px;height:5.50px;background:#bdbdbd;"></div><div style="left:1093.00px;top:206.00px;width:14.00px;height:5.50px;background:#dfe3ea;"></div><div style="left:56.00px;top:211.00px;width:2.00px;height:744.60px;background:#46524c;"></div><div style="left:865.80px;top:211.00px;width:1.50px;height:744.60px;background:#46524c;"></div><div style="left:640.00px;top:917.83px;width:226.80px;height:37.33px;border:2px solid #1b5ad6;box-sizing:border-box;"></div><div style="left:862.50px;top:951.66px;width:8.00px;height:8.00px;background:#1b5ad6;border-radius:50%;"></div><div style="left:1095.00px;top:217.50px;width:11.00px;height:31.50px;background:#c8c9cc;border-radius:6px;"></div><div style="left:1093.00px;top:917.00px;width:14.00px;height:1.00px;background:#dadce0;"></div><div style="left:1093.00px;top:937.00px;width:14.00px;height:1.00px;background:#dadce0;"></div><div style="left:1093.00px;top:957.00px;width:14.00px;height:1.00px;background:#dadce0;"></div><svg style="position:absolute;left:1096.50px;top:923.50px;" width="8" height="5" viewBox="0 0 8 5"><path d="M0 5 H8 L4 0 Z" fill="#777"/></svg><svg style="position:absolute;left:1096.50px;top:944.50px;" width="8" height="5" viewBox="0 0 8 5"><path d="M0 0 H8 L4 5 Z" fill="#777"/></svg><div style="left:0.00px;top:955.50px;width:1107.00px;height:1.00px;background:#dadce0;"></div><div style="left:56.50px;top:956.00px;width:1.00px;height:16.00px;background:#dadce0;"></div><div style="left:60.00px;top:959.00px;width:332.00px;height:11.00px;background:#c8c9cc;border-radius:6px;"></div><div style="left:1054.00px;top:956.00px;width:1.00px;height:16.00px;background:#dadce0;"></div><div style="left:1074.00px;top:956.00px;width:1.00px;height:16.00px;background:#dadce0;"></div><div style="left:1093.00px;top:956.00px;width:1.00px;height:16.00px;background:#dadce0;"></div><svg style="position:absolute;left:1060.50px;top:961.00px;" width="5" height="8" viewBox="0 0 5 8"><path d="M5 0 V8 L0 4 Z" fill="#777"/></svg><svg style="position:absolute;left:1082.00px;top:961.00px;" width="5" height="8" viewBox="0 0 5 8"><path d="M0 0 V8 L5 4 Z" fill="#777"/></svg><div style="left:0.00px;top:972.50px;width:1542.00px;height:43.50px;background:#f3f4f6;"></div><div style="left:0.00px;top:972.30px;width:1542.00px;height:1.20px;background:#d6d8dc;"></div><div style="left:69.30px;top:996.30px;width:13.50px;height:1.90px;background:#444746;"></div><div style="left:75.10px;top:990.50px;width:1.90px;height:13.50px;background:#444746;"></div><div style="left:116.80px;top:991.80px;width:17.50px;height:1.90px;background:#444746;"></div><div style="left:116.80px;top:997.00px;width:17.50px;height:1.90px;background:#444746;"></div><div style="left:116.80px;top:1002.20px;width:17.50px;height:1.90px;background:#444746;"></div><div class="t " style="left:182.00px;top:988.26px;font-size:18px;line-height:18px;color:#3c3c3c;font-weight:400;letter-spacing:0.55px;">Project Silk Tracker</div><svg style="position:absolute;left:362.80px;top:995.30px;" width="9.6" height="5" viewBox="0 0 9.6 5"><path d="M0 0 H9.6 L4.8 5 Z" fill="#444746"/></svg><div style="left:387.80px;top:973.50px;width:165.80px;height:42.50px;background:#d6e1f4;"></div><div class="t " style="left:402.40px;top:988.26px;font-size:18px;line-height:18px;color:#0b57d0;font-weight:400;letter-spacing:1px;-webkit-text-stroke:0.6px #0b57d0;">Seller status</div><svg style="position:absolute;left:529.00px;top:995.30px;" width="10" height="5" viewBox="0 0 10 5"><path d="M0 0 H10 L5.0 5 Z" fill="#0b57d0"/></svg><div style="left:1127.50px;top:5.50px;width:398.00px;height:946.30px;background:#fdfdfd;border:1px solid #d9dbdf;border-radius:18px;box-sizing:border-box;"></div><svg style="position:absolute;left:1150.00px;top:26.50px;" width="21.5" height="21.5" viewBox="0 0 23 23"><path d="M11.5 0 Q13.6 9.4 23 11.5 Q13.6 13.6 11.5 23 Q9.4 13.6 0 11.5 Q9.4 9.4 11.5 0 Z" fill="#1f1f1f"/></svg><div class="t " style="left:1184.00px;top:26.95px;font-size:20.5px;line-height:20.5px;color:#1f1f1f;font-weight:400;-webkit-text-stroke:0.6px #1f1f1f;">Gemini</div><div style="left:1413.30px;top:29.40px;width:3.60px;height:3.60px;background:#1f1f1f;border-radius:50%;"></div><div style="left:1413.30px;top:35.40px;width:3.60px;height:3.60px;background:#1f1f1f;border-radius:50%;"></div><div style="left:1413.30px;top:41.40px;width:3.60px;height:3.60px;background:#1f1f1f;border-radius:50%;"></div><svg style="position:absolute;left:1446.00px;top:28.00px;" width="18" height="18" viewBox="0 0 18 18"><path d="M10.5 2.5 H15.5 V7.5 M2.5 10.5 V15.5 H7.5" fill="none" stroke="#1f1f1f" stroke-width="1.9"/></svg><svg style="position:absolute;left:1486.00px;top:29.00px;" width="17" height="17" viewBox="0 0 17 17"><path d="M2 2 L15 15 M15 2 L2 15" stroke="#1f1f1f" stroke-width="2"/></svg><div style="left:1149.00px;top:56.00px;width:355.00px;height:208.00px;background:#e8eef6;border-radius:20px;"></div><svg style="position:absolute;left:1170.00px;top:79.00px;" width="23" height="22" viewBox="0 0 23 22"><path d="M11 2.3 H3.5 Q1.7 2.3 1.7 4.1 V18.9 Q1.7 20.7 3.5 20.7 H18.1 Q19.9 20.7 19.9 18.9 V11.5" fill="none" stroke="#1f1f1f" stroke-width="1.9"/><circle cx="5.4" cy="7.8" r="1.05" fill="#1f1f1f"/><circle cx="5.4" cy="11.7" r="1.05" fill="#1f1f1f"/><circle cx="5.4" cy="15.6" r="1.05" fill="#1f1f1f"/><path d="M9 7.8 H10.3 M9 11.7 H15.3 M9 15.6 H15.3" stroke="#1f1f1f" stroke-width="1.9" stroke-linecap="round"/><path d="M17.6 0.4 Q18.4 4 22 4.8 Q18.4 5.6 17.6 9.2 Q16.8 5.6 13.2 4.8 Q16.8 4 17.6 0.4 Z" fill="#1f1f1f"/></svg><div class="t " style="left:1204.00px;top:80.96px;font-size:18px;line-height:18px;color:#1f1f1f;font-weight:400;-webkit-text-stroke:0.7px #1f1f1f;letter-spacing:0.25px;">Summary of this content</div><div class="t " style="left:1168.60px;top:122.10px;font-size:17.6px;line-height:17.6px;color:#3a3a3a;font-weight:400;">This spreadsheet, "Seller status,"</div><div class="t " style="left:1168.60px;top:146.70px;font-size:17.6px;line-height:17.6px;color:#444444;font-weight:400;">provides an overview of sales</div><div class="t " style="left:1168.60px;top:170.90px;font-size:17.6px;line-height:17.6px;color:#5a5a5a;font-weight:400;">performance. It includes the</div><div class="t " style="left:1168.60px;top:195.50px;font-size:17.6px;line-height:17.6px;color:#b9bcc2;font-weight:400;">salesperson's name, sales region, thei...</div><div style="left:1318.30px;top:233.00px;width:4.20px;height:4.20px;background:#26467e;border-radius:50%;"></div><div style="left:1324.50px;top:233.00px;width:4.20px;height:4.20px;background:#26467e;border-radius:50%;"></div><div style="left:1330.70px;top:233.00px;width:4.20px;height:4.20px;background:#26467e;border-radius:50%;"></div><div class="t " style="left:1153.50px;top:290.35px;font-size:14px;line-height:14px;color:#1f1f1f;font-weight:400;-webkit-text-stroke:0.6px #1f1f1f;">See what Gemini can do</div><svg style="position:absolute;left:1481.50px;top:289.50px;" width="10" height="15" viewBox="0 0 10 15"><path d="M2 1.5 L8 7.5 L2 13.5" fill="none" stroke="#1f1f1f" stroke-width="2"/></svg><div style="left:1149.00px;top:329.60px;width:355.00px;height:79.00px;background:#e8eef6;border-radius:16px 16px 4px 4px;"></div><div style="left:1149.00px;top:411.50px;width:355.00px;height:79.20px;background:#e8eef6;border-radius:4px 4px 16px 16px;"></div><div style="left:1168.30px;top:346.60px;width:45.00px;height:45.00px;background:#f8fafd;border-radius:10px;"></div><div style="left:1168.30px;top:428.70px;width:45.00px;height:45.00px;background:#f8fafd;border-radius:10px;"></div><svg style="position:absolute;left:1178.00px;top:357.00px;" width="26" height="23" viewBox="0 0 26 23"><path d="M12.5 5 H4.5 Q2.4 5 2.4 7.1 V18.9 Q2.4 21 4.5 21 H21 Q23.1 21 23.1 18.9 V13" fill="none" stroke="#1f1f1f" stroke-width="1.9"/><path d="M5.6 17 L10 12.6 L13.4 15.4 L18.2 10.6" fill="none" stroke="#1f1f1f" stroke-width="1.9" stroke-linejoin="round"/><path d="M20 0.6 Q20.9 4.3 24.5 5.2 Q20.9 6.1 20 9.8 Q19.1 6.1 15.5 5.2 Q19.1 4.3 20 0.6 Z" fill="#1f1f1f"/></svg><svg style="position:absolute;left:1178.00px;top:439.00px;" width="26" height="26" viewBox="0 0 26 26"><path d="M11.7 3.3 A9.2 9.2 0 1 0 21.4 10.1" fill="none" stroke="#1f1f1f" stroke-width="1.9"/><circle cx="12.4" cy="8.6" r="1.25" fill="#1f1f1f"/><rect x="11.45" y="10.8" width="1.9" height="6.4" fill="#1f1f1f"/><path d="M20 1.3 Q20.8 4.9 24.3 5.7 Q20.8 6.5 20 10.1 Q19.2 6.5 15.7 5.7 Q19.2 4.9 20 1.3 Z" fill="#1f1f1f"/></svg><div class="t " style="left:1233.60px;top:351.26px;font-size:16px;line-height:16px;color:#1f1f1f;font-weight:400;-webkit-text-stroke:0.65px #1f1f1f;letter-spacing:0.1px;">Generate a chart</div><div class="t " style="left:1233.60px;top:370.96px;font-size:16px;line-height:16px;color:#5f6368;font-weight:400;-webkit-text-stroke:0.3px #5f6368;">Create a chart using this data</div><div class="t " style="left:1233.60px;top:432.96px;font-size:16px;line-height:16px;color:#1f1f1f;font-weight:400;-webkit-text-stroke:0.65px #1f1f1f;letter-spacing:0.1px;">Analyze for insights</div><div class="t " style="left:1233.60px;top:452.37px;font-size:16.1px;line-height:16.1px;color:#5f6368;font-weight:400;-webkit-text-stroke:0.3px #5f6368;">Generate insights or trends for th...</div><div class="t " style="left:1153.50px;top:517.55px;font-size:14px;line-height:14px;color:#1f1f1f;font-weight:400;-webkit-text-stroke:0.6px #1f1f1f;">Gems</div><svg style="position:absolute;left:1481.50px;top:516.50px;" width="10" height="15" viewBox="0 0 10 15"><path d="M2 1.5 L8 7.5 L2 13.5" fill="none" stroke="#1f1f1f" stroke-width="2"/></svg><div style="left:1149.00px;top:556.60px;width:355.00px;height:93.90px;background:#e8eef6;border-radius:16px 16px 4px 4px;"></div><div style="left:1149.00px;top:653.90px;width:355.00px;height:93.40px;background:#e8eef6;border-radius:4px;"></div><div style="left:1149.00px;top:751.00px;width:355.00px;height:60.00px;background:#e8eef6;border-radius:4px;"></div><div style="left:1168.00px;top:581.00px;width:46.00px;height:46.00px;background:#b9bcc4;border-radius:50%;"></div><svg style="position:absolute;left:1178.00px;top:590.00px;" width="26" height="26" viewBox="0 0 26 26"><rect x="8" y="3.5" width="15" height="15" rx="1.5" fill="none" stroke="#66686e" stroke-width="2.1"/><circle cx="15.5" cy="8.7" r="2.4" fill="#66686e"/><path d="M10.5 16.5 C11 13.5 13 12.5 15.5 12.5 C18 12.5 20 13.5 20.5 16.5 Z" fill="#66686e"/><path d="M4 8 V22 H18.5" fill="none" stroke="#66686e" stroke-width="2.3"/></svg><div style="left:1168.00px;top:678.20px;width:46.00px;height:46.00px;background:#efc283;border-radius:50%;"></div><svg style="position:absolute;left:1178.00px;top:688.00px;" width="26" height="26" viewBox="0 0 26 26"><path d="M3 3.2 H22 V17.3 H7.3 L3 21.5 Z" fill="none" stroke="#5e5347" stroke-width="2.2" stroke-linejoin="round"/><circle cx="12.5" cy="8" r="2" fill="#5e5347"/><path d="M8.5 14 C8.8 12 10.3 11.2 12.5 11.2 C14.7 11.2 16.2 12 16.5 14 Z" fill="#5e5347"/></svg><div class="t " style="left:1233.60px;top:575.06px;font-size:16px;line-height:16px;color:#1f1f1f;font-weight:400;-webkit-text-stroke:0.65px #1f1f1f;letter-spacing:0.1px;">Sentiment analyzer</div><div class="t " style="left:1233.60px;top:595.46px;font-size:16px;line-height:16px;color:#5f6368;font-weight:400;-webkit-text-stroke:0.3px #5f6368;">Analyze customer feedback to</div><div class="t " style="left:1233.60px;top:614.96px;font-size:16px;line-height:16px;color:#5f6368;font-weight:400;-webkit-text-stroke:0.3px #5f6368;">reveal trends and make...</div><div class="t " style="left:1233.60px;top:672.36px;font-size:16px;line-height:16px;color:#1f1f1f;font-weight:400;-webkit-text-stroke:0.65px #1f1f1f;letter-spacing:0.1px;">Outreach specialist</div><div class="t " style="left:1233.60px;top:692.26px;font-size:16px;line-height:16px;color:#5f6368;font-weight:400;-webkit-text-stroke:0.3px #5f6368;">Craft personalized messages to</div><div class="t " style="left:1233.60px;top:711.96px;font-size:16px;line-height:16px;color:#5f6368;font-weight:400;-webkit-text-stroke:0.3px #5f6368;">potential customers, build...</div><div class="t " style="left:1233.60px;top:769.46px;font-size:16px;line-height:16px;color:#1f1f1f;font-weight:400;-webkit-text-stroke:0.65px #1f1f1f;letter-spacing:0.1px;">Sales pitch ideator</div><div style="left:1172.00px;top:772.00px;width:38.00px;height:38.00px;background:#c9ccd3;border-radius:50%;"></div><div style="left:1509.80px;top:89.00px;width:9.50px;height:608.00px;background:#c8c9cc;border-radius:5px;"></div><div style="left:1277.30px;top:375.60px;width:98.00px;height:29.10px;background:#202124;border-radius:5px;"></div><div class="t " style="left:1287.40px;top:382.80px;font-size:15px;line-height:15px;color:#ffffff;font-weight:400;">More Gems</div><div style="left:1127.50px;top:5.50px;width:398.00px;height:62.50px;background:#fdfdfd;border:1px solid #d9dbdf;border-bottom:none;border-radius:18px 18px 0 0;box-sizing:border-box;"></div><div style="left:1128.50px;top:67.20px;width:396.00px;height:1.20px;background:#dfe1e5;"></div><svg style="position:absolute;left:1150.00px;top:26.50px;" width="21.5" height="21.5" viewBox="0 0 23 23"><path d="M11.5 0 Q13.6 9.4 23 11.5 Q13.6 13.6 11.5 23 Q9.4 13.6 0 11.5 Q9.4 9.4 11.5 0 Z" fill="#1f1f1f"/></svg><div class="t " style="left:1184.00px;top:26.95px;font-size:20.5px;line-height:20.5px;color:#1f1f1f;font-weight:400;-webkit-text-stroke:0.6px #1f1f1f;">Gemini</div><div style="left:1413.30px;top:29.40px;width:3.60px;height:3.60px;background:#1f1f1f;border-radius:50%;"></div><div style="left:1413.30px;top:35.40px;width:3.60px;height:3.60px;background:#1f1f1f;border-radius:50%;"></div><div style="left:1413.30px;top:41.40px;width:3.60px;height:3.60px;background:#1f1f1f;border-radius:50%;"></div><svg style="position:absolute;left:1446.00px;top:28.00px;" width="18" height="18" viewBox="0 0 18 18"><path d="M10.5 2.5 H15.5 V7.5 M2.5 10.5 V15.5 H7.5" fill="none" stroke="#1f1f1f" stroke-width="1.9"/></svg><svg style="position:absolute;left:1486.00px;top:29.00px;" width="17" height="17" viewBox="0 0 17 17"><path d="M2 2 L15 15 M15 2 L2 15" stroke="#1f1f1f" stroke-width="2"/></svg><div style="left:1127.70px;top:776.40px;width:397.50px;height:175.40px;background:#fbfbfc;border:1px solid #d9dbdf;border-radius:19px;box-sizing:border-box;"></div><div style="left:1148.70px;top:797.00px;width:355.80px;height:74.70px;background:#e8eef6;border-radius:38px;"></div><div class="t " style="left:1174.00px;top:824.40px;font-size:20.2px;line-height:20.2px;color:#474747;font-weight:400;">Enter a prompt here</div><div class="t" style="left:1128px;top:894.22px;width:397px;text-align:center;font-size:14.4px;line-height:14.4px;color:#555;-webkit-text-stroke:0.3px #555;letter-spacing:0.1px">Gemini in Workspace can make mistakes,</div><div class="t" style="left:1128px;top:913.82px;width:397px;text-align:center;font-size:14.4px;line-height:14.4px;color:#555;-webkit-text-stroke:0.3px #555;letter-spacing:0.1px">so double-check responses. <span style="color:#333;-webkit-text-stroke:0.6px #333;text-decoration:underline;text-underline-offset:3px;text-decoration-thickness:1.5px">Learn more</span></div><svg style="position:absolute;left:1285.00px;top:888.00px;" width="10" height="22" viewBox="0 0 10 22"><path d="M1 1 Q5 1 5 4 Q5 1 9 1 M5 4 V18 M1 21 Q5 21 5 18 Q5 21 9 21" fill="none" stroke="#1f1f1f" stroke-width="1.5"/></svg><div style="left:0.00px;top:0.00px;width:1542.00px;height:1.00px;background:#c4c6c9;"></div><div style="left:0.00px;top:0.00px;width:1.20px;height:1016.00px;background:#c7c9cc;"></div><div style="left:1540.50px;top:0.00px;width:1.50px;height:1016.00px;background:#bfc1c4;"></div><div style="left:0.00px;top:1015.00px;width:1542.00px;height:1.00px;background:#c4c6c9;"></div>
</body></html>
